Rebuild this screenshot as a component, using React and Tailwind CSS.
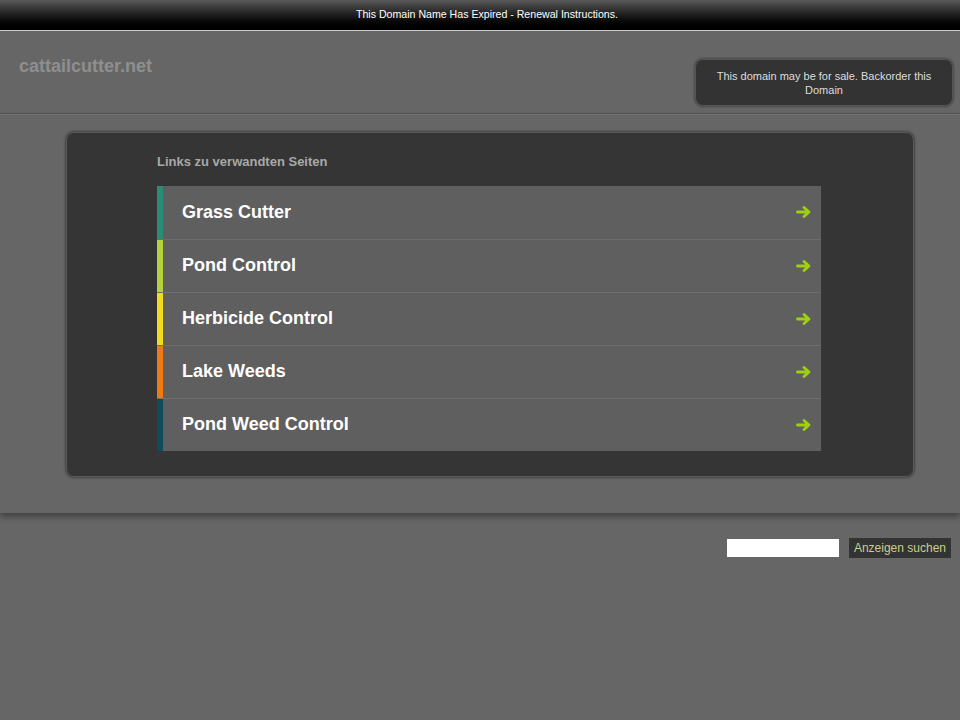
const links = [
  { title: 'Grass Cutter', bar: 'bg-[#2a8c74]' },
  { title: 'Pond Control', bar: 'bg-[#b4d33a]' },
  { title: 'Herbicide Control', bar: 'bg-[#f1dc22]' },
  { title: 'Lake Weeds', bar: 'bg-[#ee7a14]' },
  { title: 'Pond Weed Control', bar: 'bg-[#0f4b5c]' },
];

function Arrow() {
  return (
    <svg width="16" height="14" viewBox="0 0 16 14" className="shrink-0">
      <path d="M1.5 7h10.5M8 2.5l5 4.5-5 4.5" fill="none" stroke="#9fd00e" strokeWidth="2.8" strokeLinecap="round" strokeLinejoin="round" />
    </svg>
  );
}

export default function App() {
  return (
    <div className="min-h-[720px] bg-[#666666] font-['Liberation_Sans',Arial,sans-serif]">
      {/* expired bar */}
      <div className="h-[31px] bg-gradient-to-b from-[#5a5a5a] to-black flex items-center justify-center border-b border-[#cfcfcf] pl-[14px]">
        <span className="text-[10.6px] text-white">This Domain Name Has Expired - Renewal Instructions.</span>
      </div>

      {/* header */}
      <div className="h-[83px] border-b border-[#555555] flex justify-between items-start pl-[7px] pr-[7px]">
        <div className="pt-[22px] pl-[12px] text-[18px] font-bold text-[#8f8f8f]">cattailcutter.net</div>
        <div className="mt-[28px] w-[258px] h-[47px] rounded-[8px] bg-[#333333] border border-[#555555] shadow-[0_0_3px_rgba(0,0,0,0.6)] flex items-center justify-center text-center px-4">
          <span className="text-[11px] leading-[14px] text-[#dddddd]">This domain may be for sale. Backorder this Domain</span>
        </div>
      </div>

      {/* content */}
      <div className="border-t border-[#6f6f6f] pt-[17px] pb-[36px] shadow-[0_4px_6px_rgba(0,0,0,0.35)]">
        <div className="ml-[66px] mr-[46px] rounded-[8px] bg-[#353535] border border-[#5a5a5a] shadow-[0_0_3px_rgba(0,0,0,0.7)] pt-[19px] pb-[25px] pl-[90px] pr-[92px]">
          <div className="text-[13px] font-bold text-[#a8a8a8] mb-[14px]">Links zu verwandten Seiten</div>
          <div className="flex flex-col">
            {links.map((l, i) => (
              <a key={l.title} href="#" className={`flex h-[53px] ${i > 0 ? 'border-t border-[#6e6e6e]' : ''}`}>
                <div className={`w-[6px] ${l.bar}`}></div>
                <div className="flex-1 bg-[#5f5f5f] flex items-center justify-between pl-[19px] pr-[9px]">
                  <span className="text-[18px] font-bold text-white">{l.title}</span>
                  <Arrow />
                </div>
              </a>
            ))}
          </div>
        </div>
      </div>

      {/* search */}
      <div className="flex justify-end items-center gap-[10px] pt-[25px] pr-[9px]">
        <input type="text" className="w-[112px] h-[18px] bg-white border-0 outline-none" />
        <button className="h-[20px] px-[5px] bg-[#333333] text-[12px] text-[#c9cf8a]">Anzeigen suchen</button>
      </div>
    </div>
  );
}
